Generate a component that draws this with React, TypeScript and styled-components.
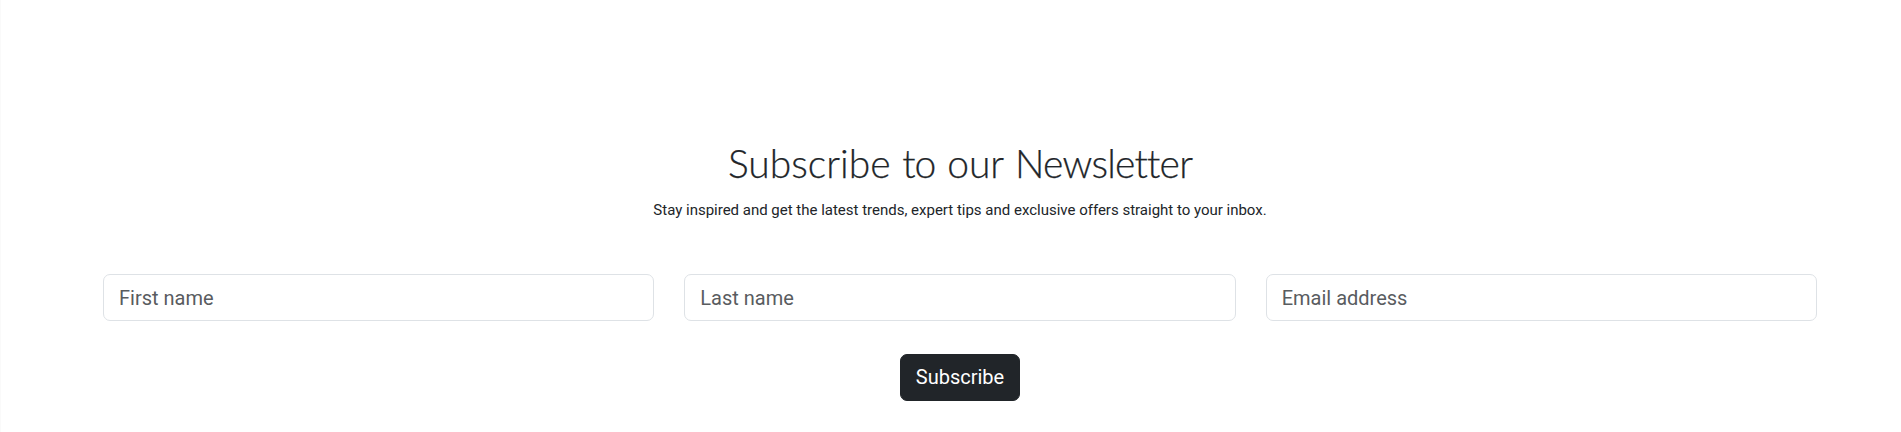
import React from "react";
import styled, { createGlobalStyle } from "styled-components";

const Global = createGlobalStyle`
  *, *::before, *::after { box-sizing: border-box; }
  body { margin: 0; background: #fff; color: #212529; font-family: Roboto, sans-serif; }
`;
const Section = styled.section`
  height: 432px; padding: 136px 84px 0 102px; border-left: 1px solid #fafafa;
  display: flex; flex-direction: column; align-items: stretch; text-align: center;
`;
const Title = styled.h2`
  margin: 0; font: 300 39px/54px Lato, sans-serif; height: 56px;
  word-spacing: 1.2px; -webkit-text-stroke: 0.25px #212529;
`;
const Word = styled.span<{ $tracking: number }>`
  letter-spacing: ${(p) => p.$tracking}px;
`;
const Lead = styled.p`
  margin: 6px 0 0; font-size: 15px; line-height: 24px; letter-spacing: -0.005px;
`;
const Form = styled.form`
  margin-top: 52px; display: flex; flex-direction: column; align-items: center; gap: 33px;
`;
const Fields = styled.div`
  width: 100%; display: grid; grid-template-columns: repeat(3, 1fr); gap: 30px;
`;
const Field = styled.input`
  width: 100%; height: 47px; padding: 0 15px; border: 1px solid #dee2e6; border-radius: 7px;
  font: 400 20px/30px Roboto, sans-serif; background: #fff;
  &::placeholder { color: #595c5f; opacity: 1; }
`;
const Submit = styled.button`
  height: 47px; width: 120px; padding: 0 0 1px; border: 1px solid #212529; border-radius: 7px;
  background: #212529; color: #fff; font: 400 20px/30px Roboto, sans-serif;
`;

export default function App() {
  return (
    <>
      <Global />
      <Section>
        <Title>
          <Word $tracking={0}>Subscribe</Word> <Word $tracking={-1}>to</Word>{" "}
          <Word $tracking={0}>our</Word> <Word $tracking={-0.8}>Newsletter</Word>
        </Title>
        <Lead>Stay inspired and get the latest trends, expert tips and exclusive offers straight to your inbox.</Lead>
        <Form>
          <Fields>
            <Field placeholder="First name" />
            <Field placeholder="Last name" />
            <Field placeholder="Email address" />
          </Fields>
          <Submit type="button">Subscribe</Submit>
        </Form>
      </Section>
    </>
  );
}
